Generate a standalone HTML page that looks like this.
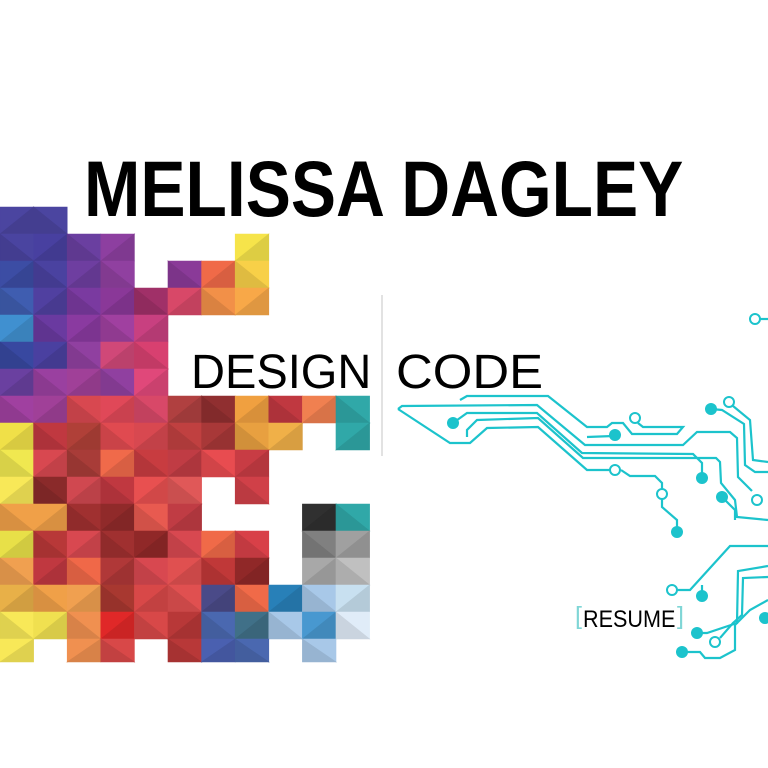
<!DOCTYPE html>
<html><head><meta charset="utf-8">
<style>
html,body{margin:0;padding:0;background:#fff;width:768px;height:768px;overflow:hidden}
#wrap{position:relative;width:768px;height:768px}
svg{position:absolute;left:0;top:0}
.t{position:absolute;font-family:"Liberation Sans",sans-serif;white-space:nowrap;color:#000;line-height:1}
</style></head><body><div id="wrap">
<svg id="mosaic" width="768" height="768"></svg>
<svg width="768" height="768">
<line x1="382" y1="295" x2="382" y2="456" stroke="#d8d8d8" stroke-width="1.5"/>
<g fill="none" stroke="#1cc3cc" stroke-width="2.2">
<polyline points="398,409 450,443 470,443 487,428 538,427 587,470 610,470"/>
<polyline points="621,470 630,476 655,476 662,483 662,489"/>
<polyline points="662,499 662,507 677,520 677,528"/>
<polyline points="398,409 402,406 537,405 585,445 683,445 697,432 730,432 737,438 738,477 752,491"/>
<polyline points="460,400 467,396 548,396 587,427 607,427 612,423 623,423 632,434 677,434 683,427 643,427 638,423"/>
<polyline points="453,423 467,413 537,413 582,453 693,454 702,463 702,476"/>
<polyline points="467,437 467,430 477,420 538,418 583,458 716,458 720,462 721,483 735,500 737,517 768,520"/>
<polyline points="587,437 613,436"/>
<polyline points="711,409 722,410 744,424 745,465 755,472 768,472"/>
<polyline points="733,406 750,420 753,460 768,462"/>
<polyline points="759,319 768,319"/>
<polyline points="768,546 730,546 690,590 677,590"/>
<polyline points="702,595 702,585"/>
<polyline points="768,566 738,571 737,623 707,633 697,633"/>
<polyline points="768,577 743,578 742,615 733,623 720,638"/>
<polyline points="682,652 700,652 705,658 720,658 735,650 735,625 750,610 768,600"/>
<polyline points="722,497 735,510 735,520"/>
</g>
<g fill="#1cc3cc">
<circle cx="453" cy="423" r="6"/><circle cx="615" cy="435" r="6"/><circle cx="702" cy="478" r="6"/>
<circle cx="677" cy="532" r="6"/><circle cx="722" cy="497" r="6"/><circle cx="711" cy="409" r="6"/>
<circle cx="702" cy="596" r="6"/><circle cx="697" cy="633" r="6"/><circle cx="682" cy="652" r="6"/>
<circle cx="765" cy="618" r="6"/>
</g>
<g fill="#fff" stroke="#1cc3cc" stroke-width="2">
<circle cx="635" cy="418" r="5"/><circle cx="615" cy="470" r="5"/><circle cx="662" cy="494" r="5"/>
<circle cx="757" cy="500" r="5"/><circle cx="729" cy="402" r="5"/><circle cx="755" cy="319" r="5"/>
<circle cx="672" cy="590" r="5"/><circle cx="715" cy="642" r="5"/>
</g>
</svg>
<div class="t" style="left:84px;top:149px;font-size:79px;font-weight:bold;transform-origin:0 0;transform:scaleX(0.857)">MELISSA DAGLEY</div>
<div class="t" style="left:191px;top:349px;font-size:48px;transform-origin:0 0;transform:scaleX(0.98)">DESIGN</div>
<div class="t" style="left:396px;top:349px;font-size:48px;transform-origin:0 0;transform:scaleX(1.06)">CODE</div>
<div class="t" style="left:575px;top:604px;font-size:25px;color:#7fd6d6">[</div>
<div class="t" style="left:583px;top:608px;font-size:24px;transform-origin:0 0;transform:scaleX(0.9)">RESUME</div>
<div class="t" style="left:677px;top:604px;font-size:25px;color:#7fd6d6">]</div>
</div>
<script>
var W='#fff';
var rows=[
['#4b45a0','#4b45a0',W,W,W,W,W,W,W,W,W],
['#4a44a0','#4840a0','#6a3fa0','#8d3fa0',W,W,W,'#f6e44a',W,W,W],
['#3c4da4','#4a42a0','#6e3ea0','#9040a0',W,'#8a3a98','#f06a48','#f8d048',W,W,W],
['#3f5db0','#5040a0','#7a3aa0','#8a3898','#a03068','#d84868','#f29048','#f8a848',W,W,W],
['#4090d0','#6a3aa0','#8a3aa0','#a040a0','#c84080',W,W,W,W,W,W],
['#3848a0','#4a40a0','#9040a0','#d04878','#d84070',W,W,W,W,W,W],
['#6a40a0','#9a40a0','#a04098','#9040a0','#e0487a',W,W,W,W,W,W],
['#a040a0','#a04098','#d84850','#e04858','#d84868','#b04040','#902f30','#f0a040','#c03840','#f08050','#30a8a8'],
['#f0e048','#c03840','#b04038','#e04a50','#d84850','#c04040','#a83838','#e8a040','#f0b048',W,'#30a8a8'],
['#f0e850','#d84850','#a83c38','#f06a4a','#c83c40','#c03c44','#e84c50','#c83c44',W,W,W],
['#f8e858','#8a2a2a','#d04850','#c03840','#e85050','#e05858',W,'#d04048',W,W,W],
['#f0a048','#f0a048','#a03030','#902a2a','#e85a50','#c03c44',W,W,W,'#303030','#30a8a8'],
['#e8e048','#b83838','#d84850','#a03030','#902828','#d84850','#f06a48','#d84048',W,'#808080','#a0a0a0'],
['#f0a050','#c03840','#f06848','#b03838','#d84850','#e05050','#c03838','#902828',W,'#a8a8a8','#c0c0c0'],
['#e8b048','#f0a048','#f0a050','#a83830','#d84848','#e05050','#4a4a88','#f06a48','#2880b8','#a8c8e8','#c8e0f0'],
['#f8e858','#f0e050','#f09050','#e02828','#d84848','#b83838','#4a68b0','#407088','#a8c8e8','#4898d0','#e0ecf8'],
['#f8e858',W,'#f09050','#d84848',W,'#b83838','#4a60b0','#4a68b0',W,'#a8c8e8',W]
];
function shade(c,f){if(c==W)return W;var n=parseInt(c.slice(1),16),r=n>>16,g=n>>8&255,b=n&255;
r=Math.min(255,Math.round(r*f));g=Math.min(255,Math.round(g*f));b=Math.min(255,Math.round(b*f));
return 'rgb('+r+','+g+','+b+')';}
var s='',cw=33.6,rh=27,y0=207;
for(var r=0;r<rows.length;r++){for(var c=0;c<11;c++){var col=rows[r][c];if(col==W)continue;
var x=c*cw,y=y0+r*rh,x2=x+cw,y2=Math.min(y+rh,662);
var d=((r+c)%2==0);
var a,b;
if(d){a=[x,y,x2,y,x,y2];b=[x2,y,x2,y2,x,y2];}else{a=[x,y,x2,y,x2,y2];b=[x,y,x2,y2,x,y2];}
s+='<polygon points="'+a.join(',')+'" fill="'+col+'" stroke="'+col+'" stroke-width="0.6"/>';
var c2=shade(col,0.9);
s+='<polygon points="'+b.join(',')+'" fill="'+c2+'" stroke="'+c2+'" stroke-width="0.6"/>';}}
document.getElementById('mosaic').innerHTML=s;
</script>
</body></html>
